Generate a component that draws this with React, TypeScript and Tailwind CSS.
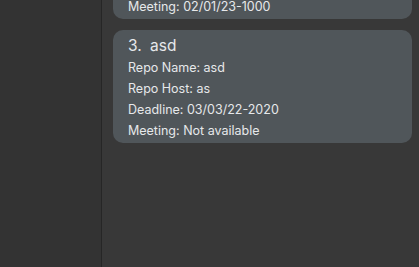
import React from "react";

const font = { fontFamily: "Inter, 'Noto Sans', sans-serif" };

export default function App() {
  return (
    <div className="flex h-screen w-full overflow-hidden bg-[#383838] text-[#e6e8ea]" style={font}>
      <div className="w-[102px] shrink-0 bg-[#333333] border-r border-[#262626]" />
      <div className="flex flex-1 flex-col gap-[11px] pl-[11px] pr-[7px]">
        <div className="-mt-[4px] rounded-b-[10px] bg-[#50565a] px-[15px] pb-[2px]">
          <div className="h-[21px] text-[12.5px] leading-[21px]">Meeting: 02/01/23-1000</div>
        </div>
        <div className="rounded-[10px] bg-[#50565a] px-[15px] pt-[5px] pb-[2px]">
          <div className="flex h-[22px] items-center text-[15.5px] leading-[22px]">
            <span className="w-[22px]">3.</span>
            <span>asd</span>
          </div>
          <div className="h-[21px] text-[12.5px] leading-[21px]">Repo Name: asd</div>
          <div className="h-[21px] text-[12.5px] leading-[21px]">Repo Host: as</div>
          <div className="h-[21px] text-[12.5px] leading-[21px]">Deadline: 03/03/22-2020</div>
          <div className="h-[21px] text-[12.5px] leading-[21px]">Meeting: Not available</div>
        </div>
      </div>
    </div>
  );
}
